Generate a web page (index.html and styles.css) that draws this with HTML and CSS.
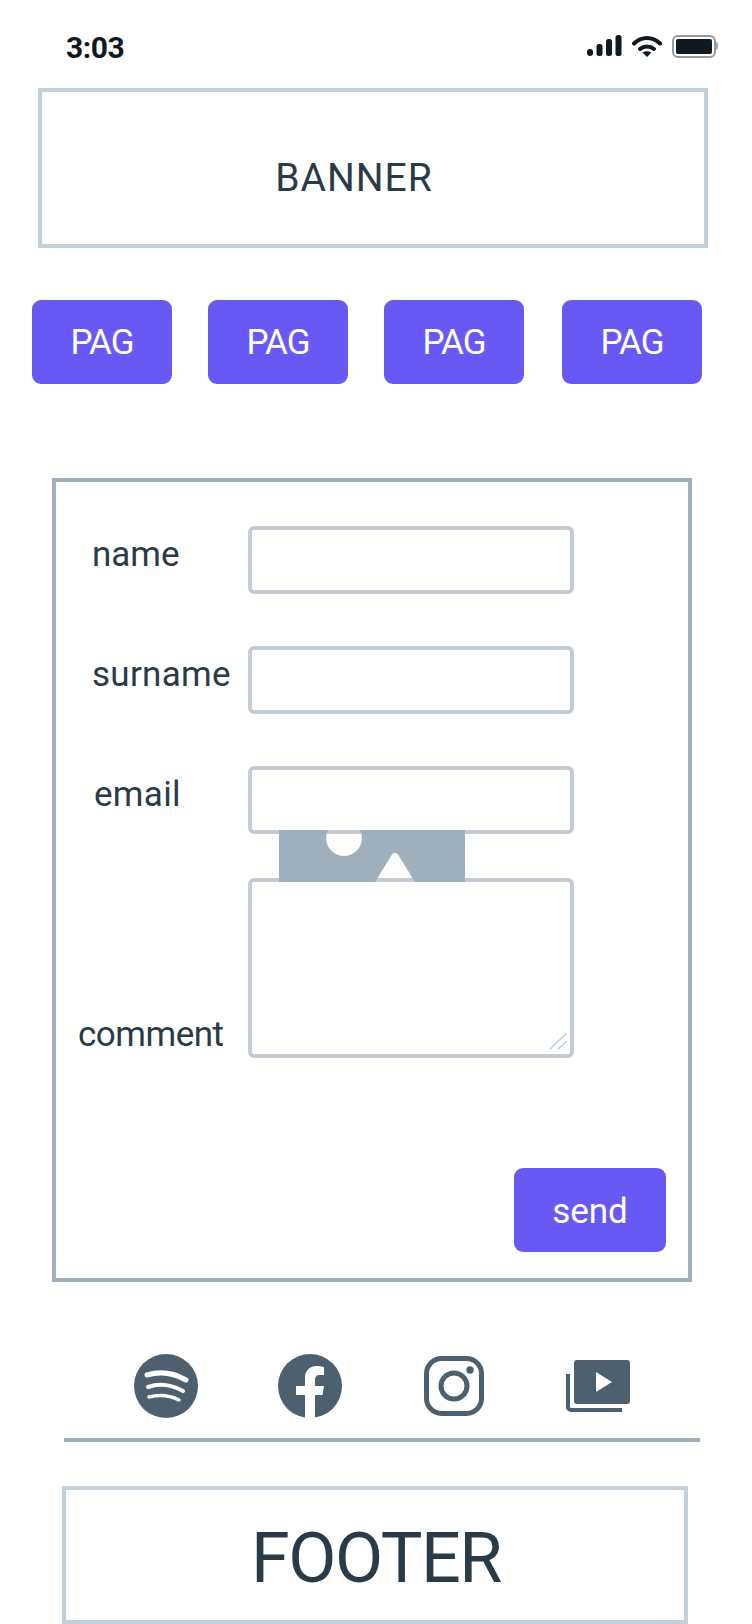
FILE: index.html
```html
<!DOCTYPE html>
<html lang="en">
<head>
    <meta charset="UTF-8">
    <meta name="viewport" content="width=device-width, initial-scale=1.0">
    <title>Contact</title>
    <link rel="stylesheet" href="styles.css">
</head>
<body>
    <div class="status-bar">
        <span class="clock">3:03</span>
        <div class="status-icons">
            <svg class="signal" width="35" height="21" viewBox="0 0 35 21">
                <rect x="0" y="14" width="6" height="7" rx="3"/>
                <rect x="9.5" y="9" width="6" height="12" rx="2.5"/>
                <rect x="19" y="4" width="6" height="17" rx="2.5"/>
                <rect x="28.5" y="0" width="6" height="21" rx="2.5"/>
            </svg>
            <svg class="wifi" width="30" height="22" viewBox="0 0 30 22">
                <path d="M2 8.5C9.500 1 20.500 1 28 8.500" fill="none" stroke="#101820" stroke-width="4" stroke-linecap="round"/>
                <path d="M8 14C12 10.500 18 10.500 22 14" fill="none" stroke="#101820" stroke-width="4" stroke-linecap="round"/>
                <path d="M10.500 17.500Q15 15 19.500 17.500L15 22Z" fill="#101820"/>
            </svg>
            <div class="battery"><div class="battery-level"></div></div>
            <div class="battery-nub"></div>
        </div>
    </div>

    <div class="banner">BANNER</div>

    <nav class="pages">
        <a class="btn page-btn">PAG</a>
        <a class="btn page-btn">PAG</a>
        <a class="btn page-btn">PAG</a>
        <a class="btn page-btn">PAG</a>
    </nav>

    <form class="contact-form">
        <div class="row">
            <label class="label-name" for="name">name</label>
            <input class="field" type="text" id="name">
        </div>
        <div class="row">
            <label class="label-name label-wide" for="surname">surname</label>
            <input class="field" type="text" id="surname">
        </div>
        <div class="row">
            <label class="label-email label-wide" for="email">email</label>
            <input class="field" type="email" id="email">
        </div>
        <div class="row row-comment">
            <label class="label-comment" for="comment">comment</label>
            <div class="comment-wrap">
                <textarea class="field comment" id="comment"></textarea>
                <svg class="grip" width="20" height="20" viewBox="0 0 20 20">
                    <path d="M1 18L18 2M9 18L18 10" stroke="#c3ccd6" stroke-width="1.500" fill="none"/>
                </svg>
            </div>
        </div>
        <div class="form-actions">
            <button class="btn send-btn" type="button">send</button>
        </div>
        <!-- image placeholder sits on top of the fields -->
        <svg class="placeholder" width="186" height="52" viewBox="0 0 186 52">
            <path d="M0 0H48.900A18 18 0 1 0 81.100 0H186V52H136L119 24.500Q116 21 113 24.500L96 52H0Z" fill="#9fafbc"/>
        </svg>
    </form>

    <div class="social">
        <svg width="64" height="64" viewBox="0 0 64 64">
            <circle cx="32" cy="32" r="32" fill="#4e5f6e"/>
            <path d="M13 21Q33 15 52 26" fill="none" stroke="#fff" stroke-width="5" stroke-linecap="round"/>
            <path d="M14 33Q31 27 49 37" fill="none" stroke="#fff" stroke-width="4" stroke-linecap="round"/>
            <path d="M15 43Q31 39 45 46" fill="none" stroke="#fff" stroke-width="3.500" stroke-linecap="round"/>
        </svg>
        <svg class="fb" width="64" height="64" viewBox="0 0 64 64">
            <circle cx="32" cy="32" r="32" fill="#4e5f6e"/>
            <path d="M27 64V41H18V32H27V24C27 16 32 12 39 12C42 12 46 13 46 13V21H42C38.500 21 37 23 37 26V32H46L44.500 41H37V64Z" fill="#fff"/>
        </svg>
        <svg width="60" height="60" viewBox="0 0 60 60">
            <rect x="2.500" y="2.500" width="55" height="55" rx="15" fill="none" stroke="#4e5f6e" stroke-width="5"/>
            <circle cx="30" cy="30" r="13" fill="none" stroke="#4e5f6e" stroke-width="5"/>
            <circle cx="46" cy="14" r="3.700" fill="#4e5f6e"/>
        </svg>
        <svg width="64" height="52" viewBox="0 0 64 52">
            <rect x="8" y="0" width="56" height="44" rx="3" fill="#4e5f6e"/>
            <path d="M30 12V32L46 22Z" fill="#fff"/>
            <path d="M2 14V47A3 3 0 0 0 5 50H56" fill="none" stroke="#4e5f6e" stroke-width="4"/>
        </svg>
    </div>

    <div class="divider"></div>

    <div class="footer">FOOTER</div>
</body>
</html>
```

FILE: styles.css
```css
body {
    font-family: Roboto, "Liberation Sans", sans-serif;
    background-color: #fff;
    color: #2a3a47;
    margin: 0;
    height: 1624px;
    overflow: hidden;
}
.status-bar {
    height: 88px;
    display: flex;
    justify-content: space-between;
    align-items: flex-start;
    padding: 35px 34px 0 66px;
    box-sizing: border-box;
}
.clock {
    font-size: 30px;
    line-height: 26px;
    font-weight: 700;
    color: #101820;
    letter-spacing: -0.5px;
}
.status-icons {
    display: flex;
    align-items: flex-start;
}
.signal {
    fill: #101820;
    margin-right: 10px;
}
.wifi {
    margin-right: 10px;
}
.battery {
    width: 44px;
    height: 23px;
    box-sizing: border-box;
    border: 2px solid #999;
    border-radius: 6px;
    padding: 2px;
}
.battery-level {
    height: 100%;
    background-color: #101820;
    border-radius: 2px;
}
.battery-nub {
    width: 2px;
    height: 8px;
    margin-top: 7px;
    background-color: #aaa;
    border-radius: 0 2px 2px 0;
}
.banner {
    width: 670px;
    height: 160px;
    margin-left: 38px;
    box-sizing: border-box;
    border: 4px solid #c3d0da;
    display: flex;
    justify-content: center;
    align-items: center;
    font-size: 39px;
    letter-spacing: 1px;
    padding: 20px 38px 0 0;
}
.pages {
    display: flex;
    gap: 36px;
    margin-top: 52px;
    padding-left: 32px;
}
.btn {
    background-color: #6859f5;
    color: #fff;
    border: none;
    border-radius: 9px;
    display: flex;
    justify-content: center;
    align-items: center;
    font-family: inherit;
}
.page-btn {
    width: 140px;
    height: 84px;
    font-size: 35px;
    letter-spacing: -1px;
}
.page-btn:last-child {
    margin-left: 2px;
}
.contact-form {
    position: relative;
    width: 640px;
    height: 804px;
    box-sizing: border-box;
    margin: 94px 0 0 52px;
    padding-top: 44px;
    border: 4px solid #9fafbc;
}
.row {
    display: flex;
    align-items: flex-start;
    margin-bottom: 52px;
}
.row label {
    width: 192px;
    box-sizing: border-box;
    font-size: 35px;
    line-height: 40px;
}
.row label.label-wide {
    letter-spacing: 0.3px;
}
.label-name {
    padding: 9px 0 0 36px;
}
.label-email {
    padding: 9px 0 0 38px;
}
.row-comment {
    margin-top: -8px;
    margin-bottom: 0;
    align-items: flex-end;
}
.row label.label-comment {
    padding: 0 0 3px 22px;
    letter-spacing: -0.5px;
}
.field {
    display: block;
    width: 326px;
    height: 68px;
    box-sizing: border-box;
    margin: 0;
    border: 4px solid #c3ccd6;
    border-radius: 6px;
    background-color: #fff;
    font-size: 16px;
    outline: none;
}
.comment-wrap {
    position: relative;
}
.comment {
    height: 180px;
    resize: none;
}
.grip {
    position: absolute;
    right: 5px;
    bottom: 7px;
}
.form-actions {
    display: flex;
    justify-content: flex-end;
    margin-top: 110px;
    padding-right: 22px;
}
.send-btn {
    width: 152px;
    height: 84px;
    font-size: 35px;
    padding: 2px 0 0;
}
.placeholder {
    position: absolute;
    left: 223px;
    top: 348px;
}
.social {
    display: flex;
    align-items: center;
    gap: 82px;
    height: 64px;
    margin-top: 72px;
    padding-left: 134px;
}
.social .fb {
    margin-left: -2px;
}
.divider {
    width: 636px;
    height: 4px;
    margin: 20px 0 0 64px;
    background-color: #9fafbc;
}
.footer {
    width: 626px;
    height: 138px;
    box-sizing: border-box;
    margin: 44px 0 0 62px;
    border: 4px solid #c3d0da;
    display: flex;
    justify-content: center;
    align-items: center;
    font-size: 70px;
    letter-spacing: -1.5px;
    padding: 5px 0 0 2px;
}
```
